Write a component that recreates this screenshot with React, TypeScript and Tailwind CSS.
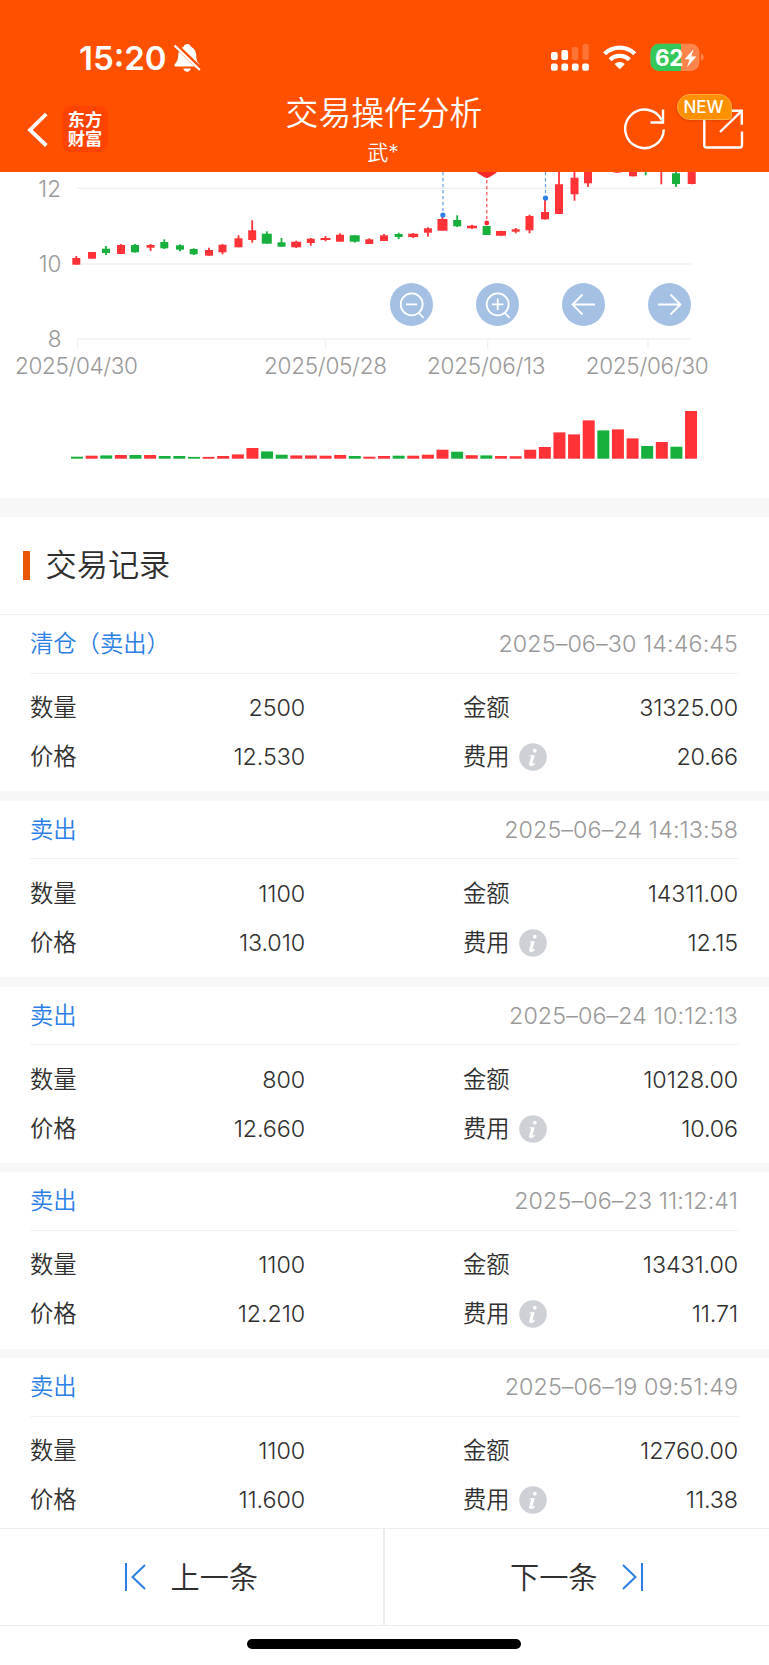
import React from "react";

const RED = "#ff3337";
const GREEN = "#17b03e";

type Candle = [x: number, top: number, bottom: number, high: number, low: number, up: 0 | 1, width?: number];

// Body and wick extents in chart pixels; the chart's origin is the bottom of the header.
const candles: Candle[] = [
  [76.3, 86, 92.7, 84, 92.7, 1],
  [92, 80, 86.7, 80, 86.7, 1],
  [106, 76.7, 81, 74, 83, 0],
  [121, 73, 82, 72, 82, 1],
  [135, 73, 80.3, 72, 80.7, 0],
  [150.6, 73, 75.7, 72, 79, 1],
  [164.3, 70, 76.3, 67.3, 77, 0],
  [180, 73.3, 77.7, 72.3, 79.3, 0],
  [193.7, 77, 82.3, 76.3, 83, 0],
  [209, 78, 83.7, 75.7, 83.7, 1],
  [222.5, 72.7, 80.3, 72, 82.3, 1],
  [238.5, 66.3, 75.3, 63.3, 75.3, 1],
  [252.2, 58.3, 68, 48.3, 70.7, 1],
  [266.8, 61.7, 71.7, 59.3, 71.7, 0, 10],
  [281.5, 70.3, 74.7, 66, 74.7, 0],
  [296.2, 69.7, 75.3, 68.7, 76, 1, 10],
  [310.8, 66.7, 71, 66, 73.7, 1],
  [325.5, 66, 68, 64, 69.3, 1, 10],
  [340, 62.7, 69.7, 61.3, 69.7, 1],
  [354.7, 63.3, 69.7, 63.3, 70.7, 0, 10],
  [369.3, 67.3, 72, 66.3, 72, 1],
  [384, 63.3, 69, 62, 69, 1],
  [398.7, 62, 65, 60.7, 67, 0],
  [413.2, 61.7, 65, 61, 66, 1, 10],
  [427.9, 56.3, 60.7, 55.3, 64.7, 1],
  [442.5, 47, 58.7, 45, 58.7, 1, 10],
  [457.2, 48, 54.3, 43.3, 55, 0],
  [472, 53.7, 56.3, 52.7, 57, 1, 10],
  [486.6, 54, 63, 54, 63, 0],
  [501, 59, 63.7, 58.7, 63.7, 1, 10],
  [515.7, 57.3, 59.7, 56, 61.3, 1],
  [529.5, 44, 58.3, 42.7, 61.3, 1],
  [545, 40, 47.3, 28, 47.7, 1],
  [559, 12.3, 42, -8, 42, 1],
  [574.5, 5.7, 22.3, -8, 28.7, 1],
  [588, -8, 11.3, -8, 15, 1],
  [617.3, -8, 0.6, -8, 0.6, 1],
  [633, -8, 4.3, -8, 4.3, 1],
  [645.7, -8, -4, -8, 3.3, 0],
  [661.3, -8, -4, -8, 12.3, 1],
  [676, 1.3, 12, 0, 15, 0],
  [691.7, -8, 12, -8, 12.3, 1],
];

const volumes = [
  2, 3, 3.3, 3.7, 3.7, 3.7, 2.7, 2.7, 1.8, 1.8, 2.7, 4.3, 10.7, 7.3, 4, 3.3, 3.3, 3, 3.7, 2.7, 2, 2.7, 3, 3, 4,
  9, 7, 3.5, 3.3, 2.7, 2.5, 9, 11.7, 26.3, 24.3, 38.3, 28.3, 29.3, 20.3, 12.7, 16.7, 12, 47.7,
];
const fallingVolumes = new Set([0, 2, 4, 6, 7, 8, 13, 14, 19, 22, 26, 28, 36, 39, 41]);

const dates = [
  { label: "2025/04/30", start: 15, width: 123, tick: 77.5 },
  { label: "2025/05/28", start: 264, width: 123, tick: 325.5 },
  { label: "2025/06/13", start: 427, width: 118.5, tick: 487.7 },
  { label: "2025/06/30", start: 585.7, width: 123, tick: 648 },
];

const records = [
  { kind: "清仓（卖出）", time: "2025–06–30 14:46:45", qty: "2500", price: "12.530", amount: "31325.00", fee: "20.66" },
  { kind: "卖出", time: "2025–06–24 14:13:58", qty: "1100", price: "13.010", amount: "14311.00", fee: "12.15" },
  { kind: "卖出", time: "2025–06–24 10:12:13", qty: "800", price: "12.660", amount: "10128.00", fee: "10.06" },
  { kind: "卖出", time: "2025–06–23 11:12:41", qty: "1100", price: "12.210", amount: "13431.00", fee: "11.71" },
  { kind: "卖出", time: "2025–06–19 09:51:49", qty: "1100", price: "11.600", amount: "12760.00", fee: "11.38" },
];

function StatusBar() {
  return (
    <div className="flex h-[86px] items-start pl-[79px] pr-[65px] pt-[43px] text-white">
      <div className="w-[94.500px] whitespace-nowrap text-[33px] font-semibold leading-[31px] tracking-[0px]">15:20</div>
      <svg width="27" height="29" viewBox="0 0 27 29" className="mt-px">
        <path
          d="M13.3 0c-1.8 0-3.2 1-3.8 2.7C5.700 4.300 4.300 7.500 4.200 11.300c-.1 4.500-1.200 6.300-2.900 8.300C0 21.200.2 22.600 1.500 22.600h22.800c1.300 0 1.800-1.400.5-3-1.700-2-2.500-3.800-2.600-8.300-.1-3.800-1.600-7-5.200-8.600C16.500 1 15.100 0 13.300 0zM9.300 24.600h7.600c-.5 1.900-1.900 3.200-3.800 3.200s-3.300-1.300-3.800-3.200z"
          fill="#fff"
        />
        <path d="M1 .5 26.500 25" stroke="#ff5000" strokeWidth="4.800" />
        <path d="M.6 1.500 25.800 26" stroke="#fff" strokeWidth="2.400" />
      </svg>
      <div className="flex-1" />
      <svg width="154" height="30" viewBox="550 43 154 30">
        <g fill="#fff">
          <rect x="551" y="52" width="6.700" height="8" rx="2" />
          <rect x="561.400" y="50" width="6.700" height="10" rx="2" />
          <rect x="571.900" y="47" width="6.400" height="13" rx="2" opacity=".2" />
          <rect x="582.400" y="44" width="6.400" height="16" rx="2" opacity=".2" />
          <rect x="551" y="63.500" width="6.700" height="7.200" rx="2" />
          <rect x="561.400" y="63.500" width="6.700" height="7.200" rx="2" />
          <rect x="571.900" y="63.500" width="6.700" height="7.200" rx="2" />
          <rect x="582.200" y="63.500" width="6.700" height="7.200" rx="2" />
        </g>
        <g fill="none" stroke="#fff" strokeWidth="4.300">
          <path d="M604.600 53.700a21.700 21.700 0 0 1 30.200 0" />
          <path d="M610.100 59.700a13.800 13.800 0 0 1 19.200 0" />
        </g>
        <path d="M619.700 69.300l-5.200-5.200a7.500 7.500 0 0 1 10.400 0z" fill="#fff" />
        <rect x="650.500" y="43.700" width="49" height="27.300" rx="8.500" fill="#ff854c" />
        <path d="M659 43.700h22V71h-22a8.500 8.500 0 0 1-8.500-8.500v-10.300a8.500 8.500 0 0 1 8.500-8.500z" fill="#34c759" />
        <path d="M701 53.500c3.600 1.200 3.600 6 0 7.200z" fill="#ff854c" />
        <path d="M693.500 49.200 684.600 59.300h5l-2.600 8 9.400-10.700h-5.100z" fill="#fff" />
        <text x="655" y="65.600" fontSize="22.500" fontWeight="700" textLength="28.500" fill="#fff">62</text>
      </svg>
    </div>
  );
}

function NavBar() {
  return (
    <div className="grid h-[86px] grid-cols-[240px_1fr_240px] text-white">
      <div className="flex items-start pl-[27px] pt-5">
        <svg width="35" height="46" viewBox="0 0 35 46" fill="none" stroke="#fff" strokeWidth="3.800">
          <path d="M19.300 8 3 24l16.300 15.500" />
        </svg>
        <div className="flex h-[46px] w-[46px] flex-col items-center justify-center rounded-[9px] bg-[#ff4300] text-[17.200px] font-bold leading-[19px]">
          <span>东方</span>
          <span>财富</span>
        </div>
      </div>
      <div className="flex flex-col items-center pt-[7px]">
        <h1 className="mr-px whitespace-nowrap text-[32.800px] font-[350] leading-[40px]">交易操作分析</h1>
        <div className="mr-[3px] mt-[7px] text-[21px] font-[350] leading-[26px]">武*</div>
      </div>
      <div className="flex items-start justify-end pr-6 pt-[22px]">
        <svg width="44" height="44" viewBox="622 108 44 44" fill="none" stroke="#fff" strokeWidth="2.400">
          <path d="M663.800 129.500a19.300 19.300 0 1 1-2-9.200" />
          <path d="M663 109.500v13h-12.500" />
        </svg>
        <div className="relative ml-[35px] h-[44px] w-[44px]">
          <svg width="44" height="44" viewBox="702 108 44 44" fill="none" stroke="#fff" strokeWidth="2.400">
            <path d="M705.300 118v27.300q0 2.200 2.200 2.200h33.300q2.200 0 2.200-2.200v-13.800" />
            <path d="M729 110.700h13.800v14M742.500 111.200 721 132" />
          </svg>
          <span className="absolute left-[-24px] top-[-14px] flex h-[26px] w-[55px] items-center justify-center rounded-[13px_13px_4px_13px] border border-[#ffab45] bg-[#ff9000] pr-[2px] pt-[2px] text-[17px] font-medium shadow-sm">
            NEW
          </span>
        </div>
      </div>
    </div>
  );
}

function ChartButton({ children, label }: { children: React.ReactNode; label: string }) {
  return (
    <button aria-label={label} className="h-[43px] w-[43px] rounded-full bg-[#a4c1e4]">
      <svg width="43" height="43" viewBox="0 0 43 43" fill="none" stroke="#fff" strokeWidth="1.800">
        {children}
      </svg>
    </button>
  );
}

function Chart() {
  return (
    <section className="relative h-[326px] bg-white">
      <svg width="769" height="326" viewBox="0 0 769 326" className="block">
        <g stroke="#f1f1f1" strokeWidth="1.500">
          <path d="M77 16.200H691M77 92H691M77 167H691" />
          {dates.map((d) => (
            <path key={d.label} d={`M${d.tick} 167v10`} />
          ))}
        </g>
        <g fill="#999" fontSize="22.500" fontWeight="350">
          <text x="61" y="24.600" textAnchor="end">12</text>
          <text x="61.500" y="100" textAnchor="end">10</text>
          <text x="61.500" y="175.300" textAnchor="end">8</text>
          {dates.map((d) => (
            <text key={d.label} x={d.start} y="201.700" textLength={d.width}>
              {d.label}
            </text>
          ))}
        </g>
        {candles.map(([x, top, bottom, high, low, up, width = 8], i) => (
          <g key={i} fill={up ? RED : GREEN}>
            <rect x={x - width / 2} y={top} width={width} height={bottom - top} />
            <rect x={x - 0.9} y={high} width="1.800" height={low - high} />
          </g>
        ))}
        <g fill="none" strokeWidth="1.200" strokeDasharray="3.300 2.700">
          <path d="M443 0v42M545.500 0v25" stroke="#5d9eea" />
          <path d="M486.800 8v43" stroke="#ff4a4a" />
        </g>
        <path d="M476.500 0h20.500q-3 3-10.200 6.300-7.200-3.300-10.300-6.300z" fill="#f8272b" />
        <circle cx="442.900" cy="43" r="2.600" fill="#2b7fe6" />
        <circle cx="545.500" cy="26" r="2.600" fill="#2b7fe6" />
        <circle cx="486.800" cy="51" r="2.400" fill="#f8272b" />
        {volumes.map((h, i) => (
          <rect key={i} x={71 + i * 14.62} y={286.7 - h} width="12" height={h} fill={fallingVolumes.has(i) ? GREEN : RED} />
        ))}
      </svg>
      <div className="absolute left-[390px] top-[111px] flex gap-[43px]">
        <ChartButton label="缩小">
          <circle cx="21.700" cy="21.300" r="11" />
          <path d="M16 21.300h11M28.500 29.500l5.200 5.500" />
        </ChartButton>
        <ChartButton label="放大">
          <circle cx="21.700" cy="21.300" r="11" />
          <path d="M16 21.300h11.400M21.700 15.600V27M28.500 29.500l5.200 5.500" />
        </ChartButton>
        <ChartButton label="前移">
          <path d="M33 21.500H10.500M20.500 11.500l-10 10 10 10" />
        </ChartButton>
        <ChartButton label="后移">
          <path d="M10 21.500h22.500M22.500 11.500l10 10-10 10" />
        </ChartButton>
      </div>
    </section>
  );
}

function Row({ label, value, info }: { label: string; value: string; info?: boolean }) {
  return (
    <div className="flex h-[49px] items-center">
      <span>{label}</span>
      {info && (
        <svg width="28" height="28" viewBox="0 0 28 28" className="-mt-px ml-[9px]">
          <circle cx="14" cy="14" r="13.800" fill="#cdd1d6" />
          <circle cx="15.800" cy="7.700" r="1.900" fill="#fff" />
          <path d="M10.800 12.300h4.900l-2.100 7.700c-.2.900.5 1 1.800-.3l.7.700c-1.500 1.800-2.700 2.600-4.300 2.600-1.500 0-2-1.100-1.600-2.500l1.800-6.500c.1-.5-.1-.7-.6-.7h-.8z" fill="#fff" />
        </svg>
      )}
      <span className="ml-auto mr-px tracking-[-0.100px]">{value}</span>
    </div>
  );
}

export default function App() {
  return (
    <div className="flex h-[1665px] w-[769px] flex-col overflow-hidden bg-white font-['Inter','Noto_Sans_CJK_SC',sans-serif] text-[#2f2f2f]">
      <header className="h-[172px] shrink-0 bg-[#ff5000]">
        <StatusBar />
        <NavBar />
      </header>
      <main className="h-[1356px] shrink-0 overflow-hidden">
        <Chart />
        <div className="h-[19px] bg-[#f7f7f7]" />
        <div className="flex h-[98px] items-center border-b border-[#f0f0f0] pl-[23px]">
          <span className="h-[29px] w-[6.500px] bg-[#ea5504]" />
          <h2 className="ml-4 mt-px text-[31.200px] font-[350] leading-none">交易记录</h2>
        </div>
        {records.map((r) => (
          <article key={r.time} className="text-[23.300px] font-[350]">
            <div className="h-[176.300px] px-[30px]">
              <div className="flex h-[58.500px] items-center justify-between border-b border-[#f2f2f2] pt-[1.500px]">
                <span className="text-[#2b7fe6]">{r.kind}</span>
                <time className="mr-px tracking-[0.100px] text-[#999]">{r.time}</time>
              </div>
              <div className="grid grid-cols-[276px_276px] justify-between pt-[10.500px]">
                <Row label="数量" value={r.qty} />
                <Row label="金额" value={r.amount} />
                <Row label="价格" value={r.price} />
                <Row label="费用" value={r.fee} info />
              </div>
            </div>
            <div className="h-[9.500px] bg-[#f7f7f7]" />
          </article>
        ))}
      </main>
      <nav className="grid h-[98px] shrink-0 grid-cols-2 border-y border-[#ececec] text-[29.200px] font-[350]">
        <button className="flex items-center justify-center border-r-2 border-[#ececec]">
          <svg width="22" height="28" viewBox="0 0 22 28" fill="none" stroke="#2b7fe6" strokeWidth="2" className="mr-6">
            <path d="M2 0v28M21 2 8.500 14 21 26" />
          </svg>
          <span className="mt-px">上一条</span>
        </button>
        <button className="flex items-center justify-center">
          <span className="mt-px">下一条</span>
          <svg width="22" height="28" viewBox="0 0 22 28" fill="none" stroke="#2b7fe6" strokeWidth="2" className="ml-6">
            <path d="M20 0v28M1 2l12.500 12L1 26" />
          </svg>
        </button>
      </nav>
      <div className="ml-[247px] mt-[13px] h-[10px] w-[274px] rounded-full bg-black" />
    </div>
  );
}
